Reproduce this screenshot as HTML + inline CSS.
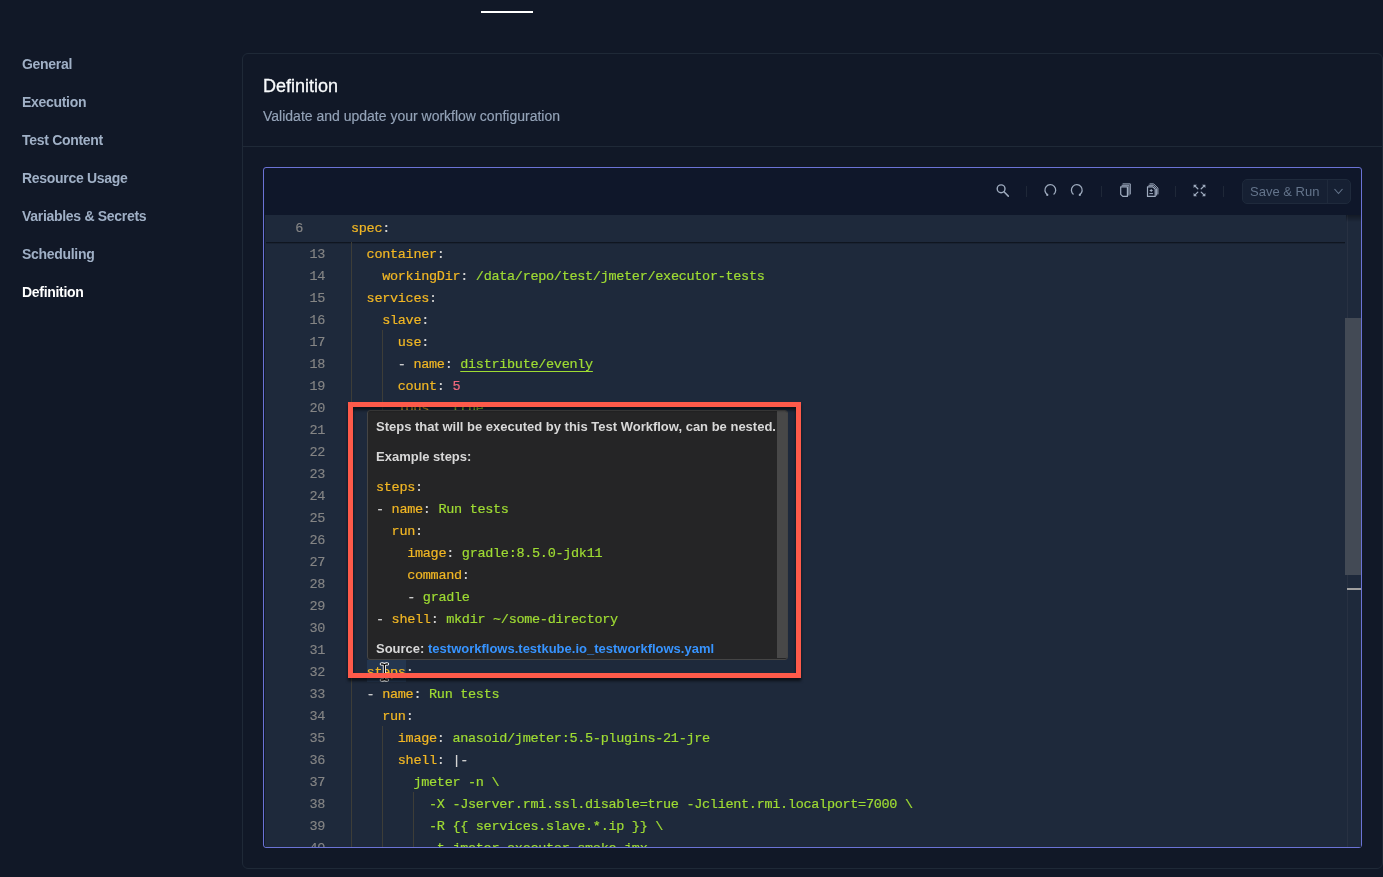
<!DOCTYPE html>
<html><head><meta charset="utf-8"><title>Definition</title>
<style>
*{margin:0;padding:0;box-sizing:border-box}
html,body{width:1383px;height:877px;overflow:hidden;background:#111827;font-family:"Liberation Sans",sans-serif}
.a,.nav,.ttl,.sub,.gl,.cl,.ic{will-change:transform}
.a{position:absolute}
.nav{position:absolute;left:22px;font-weight:bold;font-size:14px;letter-spacing:-0.3px;line-height:16px;color:#a0b0c6;white-space:nowrap}
.card{position:absolute;left:242px;top:53px;width:1141px;height:816px;border:1px solid #1f2937;border-radius:6px;background:#111827}
.ttl{position:absolute;left:263px;top:75px;font-size:18px;line-height:22px;color:#f8fafc;-webkit-text-stroke:0.3px currentColor}
.sub{position:absolute;left:263px;top:107px;font-size:14px;line-height:18px;color:#94a3b8;-webkit-text-stroke:0.15px currentColor}
.sep{position:absolute;left:243px;top:146px;width:1139px;height:1px;background:#1f2937}
.ed{position:absolute;left:263px;top:167px;width:1099px;height:681px;border:1px solid #6b73d6;border-radius:3px;background:#0f172a;overflow:hidden}
.code{position:absolute;left:265px;top:215px;width:1096px;height:632px;background:#1e293b}
.gl{position:absolute;left:264px;width:61px;text-align:right;font-family:"Liberation Mono",monospace;font-size:13.5px;letter-spacing:-0.3px;-webkit-text-stroke:0.15px currentColor;line-height:22px;color:#858585}
.cl{position:absolute;left:351px;font-family:"Liberation Mono",monospace;font-size:13.5px;letter-spacing:-0.3px;-webkit-text-stroke:0.2px currentColor;line-height:22px;color:#d4d4d4;white-space:pre}
.tl{position:absolute;left:8px;font-family:"Liberation Mono",monospace;font-size:13.5px;letter-spacing:-0.3px;-webkit-text-stroke:0.2px currentColor;line-height:22px;color:#d4d4d4;white-space:pre}
.k{color:#f2b724} .s{color:#9fdc33} .p{color:#d4d4d4} .n{color:#f0697d}
.u{text-decoration:underline;text-underline-offset:3px}
.ig{position:absolute;width:1px;background:#3d3d38}
.ic{position:absolute}
.tsep{position:absolute;top:186px;width:1px;height:11px;background:#1f2838}
</style></head><body>
<div class="a" style="left:481px;top:11px;width:52px;height:2px;background:#fff"></div>
<div class="nav" style="top:56px">General</div>
<div class="nav" style="top:94px">Execution</div>
<div class="nav" style="top:132px">Test Content</div>
<div class="nav" style="top:170px">Resource Usage</div>
<div class="nav" style="top:208px">Variables &amp; Secrets</div>
<div class="nav" style="top:246px">Scheduling</div>
<div class="nav" style="top:284px;color:#fff">Definition</div>
<div class="card"></div>
<div class="ttl">Definition</div>
<div class="sub">Validate and update your workflow configuration</div>
<div class="sep"></div>
<div class="ed"></div>
<div class="code"></div>
<!-- toolbar -->
<svg class="ic" style="left:980px;top:175px" width="240" height="30" viewBox="980 175 240 30" fill="none" stroke="#9eabbe">
<circle cx="1001.1" cy="188.8" r="3.9" stroke-width="1.4"/>
<path d="M1004 191.8 L1008.3 196.1" stroke-width="1.5" stroke-linecap="round"/>
<path d="M1047.3 194.6 A5.4 5.4 0 1 1 1053.6 194.4" stroke-width="1.3"/>
<circle cx="1047.3" cy="194.9" r="1.1" fill="#9eabbe" stroke="none"/>
<path d="M1073.5 194.4 A5.4 5.4 0 1 1 1079.8 194.6" stroke-width="1.3"/>
<circle cx="1079.8" cy="194.9" r="1.1" fill="#9eabbe" stroke="none"/>
<g stroke-width="1" stroke-linejoin="round">
<path d="M1122.6 183.9 H1130.3 V194.4"/>
<path d="M1121.6 185.3 H1128.9 V195.6"/>
<path d="M1120.7 186.8 H1127.4 V196.4 H1122.8 L1120.7 194.3 Z" stroke-width="1.2"/>
<path d="M1149.6 183.9 H1153.7 L1157.9 188.1 V194.4"/>
<path d="M1148.5 185.3 H1153.2 L1156.6 188.7 V195.6"/>
<path d="M1147.5 186.8 H1152.8 L1155.2 189.2 V196.4 H1147.5 Z" stroke-width="1.2"/>
<path d="M1149.4 193.6 H1153"/>
<path d="M1151.2 189 V192 M1149.7 190.5 H1152.7"/>
</g>
<g stroke-width="1.3" stroke-linecap="round">
<path d="M1194.5 185.6 L1197.8 188.8 M1204.5 185.6 L1201.2 188.8 M1194.5 195.4 L1197.8 192.1 M1204.5 195.4 L1201.2 192.1"/>
</g>
<g fill="#9eabbe" stroke="none">
<path d="M1193.6 184.7 H1197 L1193.6 188.1 Z"/>
<path d="M1205.4 184.7 H1202 L1205.4 188.1 Z"/>
<path d="M1193.6 196.3 H1197 L1193.6 192.9 Z"/>
<path d="M1205.4 196.3 H1202 L1205.4 192.9 Z"/>
</g>
</svg>
<div class="tsep" style="left:1026px"></div>
<div class="tsep" style="left:1101px"></div>
<div class="tsep" style="left:1175px"></div>
<div class="tsep" style="left:1223px"></div>
<div class="a" style="left:1242px;top:179px;width:109px;height:25px;border:1px solid #1f2a3c;border-radius:5px;background:#162033"></div>
<div class="a" style="left:1327px;top:180px;width:1px;height:23px;background:#1f2a3c"></div>
<div class="a" style="left:1250px;top:183px;font-size:13px;line-height:17px;color:#64748b">Save &amp; Run</div>
<svg class="ic" style="left:1333px;top:186px" width="11" height="10" viewBox="0 0 11 10" fill="none" stroke="#64748b" stroke-width="1.1"><path d="M1.5 3 L5.5 7.5 L9.5 3"/></svg>
<!-- sticky -->
<div class="gl" style="top:218px;left:264px;width:39px">6</div>
<div class="cl" style="top:218px"><span class="k">spec</span><span class="p">:</span></div>
<div class="a" style="left:266px;top:242px;width:1079px;height:2px;background:linear-gradient(#0b0f17,#1e293b)"></div>
<!-- word highlight -->
<div class="a" style="left:367px;top:660px;width:39px;height:22px;background:#24364f"></div>
<div class="a" style="left:0;top:0;width:1361px;height:847px;overflow:hidden"><div class="gl" style="top:244px">13</div><div class="cl" style="top:244px">  <span class="k">container</span><span class="p">:</span></div><div class="gl" style="top:266px">14</div><div class="cl" style="top:266px">    <span class="k">workingDir</span><span class="p">: </span><span class="s">/data/repo/test/jmeter/executor-tests</span></div><div class="gl" style="top:288px">15</div><div class="cl" style="top:288px">  <span class="k">services</span><span class="p">:</span></div><div class="gl" style="top:310px">16</div><div class="cl" style="top:310px">    <span class="k">slave</span><span class="p">:</span></div><div class="gl" style="top:332px">17</div><div class="cl" style="top:332px">      <span class="k">use</span><span class="p">:</span></div><div class="gl" style="top:354px">18</div><div class="cl" style="top:354px">      <span class="p">- </span><span class="k">name</span><span class="p">: </span><span class="s u">distribute/evenly</span></div><div class="gl" style="top:376px">19</div><div class="cl" style="top:376px">      <span class="k">count</span><span class="p">: </span><span class="n">5</span></div><div class="gl" style="top:398px">20</div><div class="cl" style="top:398px">      <span class="k">logs</span><span class="p">:  </span><span class="s">true</span></div><div class="gl" style="top:420px">21</div><div class="gl" style="top:442px">22</div><div class="gl" style="top:464px">23</div><div class="gl" style="top:486px">24</div><div class="gl" style="top:508px">25</div><div class="gl" style="top:530px">26</div><div class="gl" style="top:552px">27</div><div class="gl" style="top:574px">28</div><div class="gl" style="top:596px">29</div><div class="gl" style="top:618px">30</div><div class="gl" style="top:640px">31</div><div class="gl" style="top:662px">32</div><div class="cl" style="top:662px">  <span class="k">steps</span><span class="p">:</span></div><div class="gl" style="top:684px">33</div><div class="cl" style="top:684px">  <span class="p">- </span><span class="k">name</span><span class="p">: </span><span class="s">Run tests</span></div><div class="gl" style="top:706px">34</div><div class="cl" style="top:706px">    <span class="k">run</span><span class="p">:</span></div><div class="gl" style="top:728px">35</div><div class="cl" style="top:728px">      <span class="k">image</span><span class="p">: </span><span class="s">anasoid/jmeter:5.5-plugins-21-jre</span></div><div class="gl" style="top:750px">36</div><div class="cl" style="top:750px">      <span class="k">shell</span><span class="p">: |-</span></div><div class="gl" style="top:772px">37</div><div class="cl" style="top:772px">        <span class="s">jmeter -n \</span></div><div class="gl" style="top:794px">38</div><div class="cl" style="top:794px">          <span class="s">-X -Jserver.rmi.ssl.disable=true -Jclient.rmi.localport=7000 \</span></div><div class="gl" style="top:816px">39</div><div class="cl" style="top:816px">          <span class="s">-R {{ services.slave.*.ip }} \</span></div><div class="gl" style="top:838px">40</div><div class="cl" style="top:838px">          <span class="s">-t jmeter-executor-smoke.jmx</span></div><div class="ig" style="left:351.0px;top:242px;height:616px"></div><div class="ig" style="left:382.2px;top:330px;height:88px"></div><div class="ig" style="left:382.2px;top:418px;height:242px"></div><div class="ig" style="left:382.2px;top:726px;height:132px"></div><div class="ig" style="left:413.4px;top:792px;height:66px"></div></div>
<!-- scrollbar -->
<div class="a" style="left:1347px;top:215px;width:1px;height:632px;background:#283142"></div>
<div class="a" style="left:1346px;top:215px;width:15px;height:7px;background:linear-gradient(rgba(0,0,0,.35),rgba(0,0,0,0))"></div>
<div class="a" style="left:1345px;top:318px;width:16px;height:257px;background:#434a55"></div>
<div class="a" style="left:1347px;top:588px;width:14px;height:2px;background:#a0a0a0"></div>
<!-- tooltip -->

<div class="a" style="left:367px;top:410px;width:421px;height:250px;background:#252526;border:1px solid #454545;border-radius:3px;overflow:hidden">
 <div class="a" style="left:8px;top:8px;font-weight:bold;font-size:13px;line-height:16px;color:#d8d8d8;white-space:nowrap">Steps that will be executed by this Test Workflow, can be nested.</div>
 <div class="a" style="left:8px;top:38px;font-weight:bold;font-size:13px;line-height:16px;color:#d8d8d8;white-space:nowrap">Example steps:</div>
 <div class="tl" style="top:66px"><span class="k">steps</span><span class="p">:</span></div><div class="tl" style="top:88px"><span class="p">- </span><span class="k">name</span><span class="p">: </span><span class="s">Run tests</span></div><div class="tl" style="top:110px">  <span class="k">run</span><span class="p">:</span></div><div class="tl" style="top:132px">    <span class="k">image</span><span class="p">: </span><span class="s">gradle:8.5.0-jdk11</span></div><div class="tl" style="top:154px">    <span class="k">command</span><span class="p">:</span></div><div class="tl" style="top:176px">    <span class="p">- </span><span class="s">gradle</span></div><div class="tl" style="top:198px"><span class="p">- </span><span class="k">shell</span><span class="p">: </span><span class="s">mkdir ~/some-directory</span></div>
 <div class="a" style="left:8px;top:230px;font-weight:bold;font-size:13px;line-height:16px;color:#d8d8d8;white-space:nowrap">Source: <span style="color:#3794ff">testworkflows.testkube.io_testworkflows.yaml</span></div>
 <div class="a" style="left:409px;top:0px;width:11px;height:247px;background:#484848"></div>
</div>
<svg class="ic" style="left:376px;top:658px" width="18" height="26" viewBox="376 658 18 26">
<path d="M381.3 664 Q384.4 663.6 384.4 665.8 Q384.4 663.6 387.5 664 M384.4 665.8 V678.2 M381.3 680 Q384.4 680.4 384.4 678.2 Q384.4 680.4 387.5 680" fill="none" stroke="#fff" stroke-width="3.2" stroke-linecap="round"/>
<path d="M381.3 664 Q384.4 663.6 384.4 665.8 Q384.4 663.6 387.5 664 M384.4 665.8 V678.2 M381.3 680 Q384.4 680.4 384.4 678.2 Q384.4 680.4 387.5 680" fill="none" stroke="#000" stroke-width="1.4" stroke-linecap="round"/>
</svg>
<div class="a" style="left:348px;top:402px;width:453px;height:276px;border:5px solid #fe5a4a;filter:drop-shadow(0 3px 1.5px rgba(0,0,0,.6))"></div>
</body></html>
